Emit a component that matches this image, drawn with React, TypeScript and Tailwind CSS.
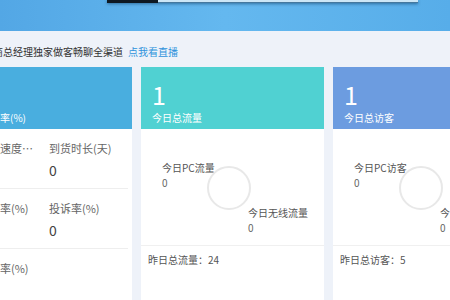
import React from 'react';

type TrafficProps = {
  color: string;
  total: number;
  title: string;
  pcLabel: string;
  mobileLabel: string;
  footer: string;
};

const TrafficCard: React.FC<TrafficProps> = ({ color, total, title, pcLabel, mobileLabel, footer }) => (
  <div className="w-[183px] shrink-0 bg-white">
    <div className={`h-[62px] px-[11px] pt-[15px] text-white ${color}`}>
      <div className="text-[25px] leading-[25px]">{total}</div>
      <div className="mt-[4px] text-[10px] leading-[14px]">{title}</div>
    </div>
    {/* 环形图 + 图例 */}
    <div className="flex h-[117px] items-start border-b border-[#f0f0f0] text-[10px] leading-[15px] text-[#555]">
      <div className="ml-[21px] mt-[31px] w-[45px] whitespace-nowrap">
        <div>{pcLabel}</div>
        <div className="text-[#666]">0</div>
      </div>
      <div className="mt-[37px] size-[44px] shrink-0 rounded-full border-2 border-[#e8e8e8]" />
      <div className="ml-[-3px] mt-[76px] whitespace-nowrap">
        <div>{mobileLabel}</div>
        <div className="text-[#666]">0</div>
      </div>
    </div>
    <div className="px-[7px] pt-[6px] text-[10px] leading-[15px] text-[#555]">{footer}</div>
    <div className="h-[60px]" />
  </div>
);

const metricRows = [
  ['平均配送速度(天)', '到货时长(天)'],
  ['退款纠纷率(%)', '投诉率(%)'],
  ['品质退款率(%)', ''],
];

const ServiceCard: React.FC = () => (
  <div className="w-[183px] shrink-0 bg-white">
    <div className="h-[62px] bg-[#49aedf] px-[11px] pt-[15px] text-white">
      <div className="text-[25px] leading-[25px]">0</div>
      <div className="mt-[4px] text-[10px] leading-[14px]">商品好评率(%)</div>
    </div>
    {metricRows.map(([left, right], i) => (
      <div key={i} className="mr-[4px] flex h-[60px] border-b border-[#eeeeee] pl-[7px] pt-[11px] text-[11px] leading-[16px] text-[#666]">
        <div className="w-[93px] shrink-0">
          <div className="w-[77px] truncate">{left}</div>
          {i < 2 && <div className="mt-[4px] text-[14px] leading-[20px] text-[#444]">0</div>}
        </div>
        {right && (
          <div className="flex-1">
            <div>{right}</div>
            <div className="mt-[4px] text-[14px] leading-[20px] text-[#444]">0</div>
          </div>
        )}
      </div>
    ))}
  </div>
);

const App: React.FC = () => {
  return (
    <div className="h-[300px] w-[450px] overflow-hidden bg-[#eef2f9] font-['Noto_Sans_CJK_SC',sans-serif]">
      {/* 顶部横幅 */}
      <div className="h-[31px] bg-gradient-to-r from-[#53a7e5] via-[#64b8ef] to-[#57ade9]">
        <div className="ml-[107px] flex h-[3px] w-[311px] shadow-[0_1px_3px_rgba(0,40,80,0.5)]">
          <div className="w-[51px] bg-[#0e1822]" />
          <div className="flex-1 border-b border-[#45789e] bg-[#cce6f6]" />
        </div>
      </div>

      <div className="h-[36px] whitespace-nowrap pt-[13px] text-[10px] leading-[15px] text-[#333]">
        <span className="ml-[-17px]">电商总经理独家做客畅聊全渠道</span>
        <span className="ml-[5px] text-[#2f93dc]">点我看直播</span>
      </div>

      <div className="ml-[-51px] flex gap-[9px]">
        <ServiceCard />
        <TrafficCard
          color="bg-[#50d1d2]"
          total={1}
          title="今日总流量"
          pcLabel="今日PC流量"
          mobileLabel="今日无线流量"
          footer="昨日总流量：24"
        />
        <TrafficCard
          color="bg-[#6c9ce0]"
          total={1}
          title="今日总访客"
          pcLabel="今日PC访客"
          mobileLabel="今日无线访客"
          footer="昨日总访客：5"
        />
      </div>
    </div>
  );
};

export default App;
